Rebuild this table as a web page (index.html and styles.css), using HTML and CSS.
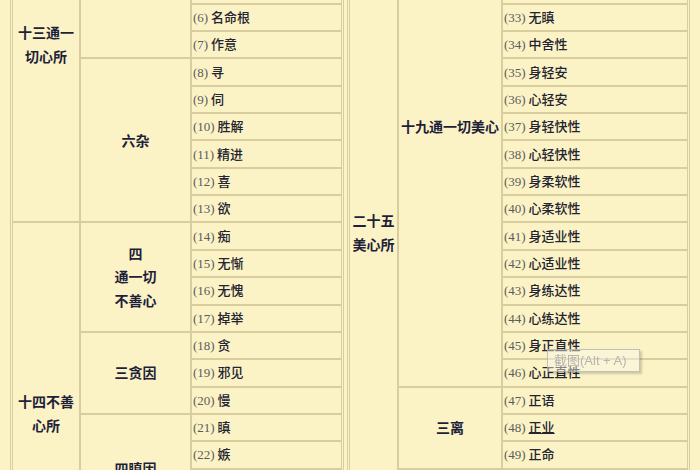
FILE: index.html
```html
<!DOCTYPE html>
<html lang="zh-CN">
<head>
<meta charset="utf-8">
<title>五十二心所</title>
<link rel="stylesheet" href="styles.css">
</head>
<body>
<div class="wrap">
  <table class="tbl left">
    <colgroup><col class="c1"><col class="c2"><col class="c3"></colgroup>
    <tbody>
      <tr><td class="lb" rowspan="13">十三通一切心所</td><td class="lb" rowspan="7">七遍一切心</td><td class="it"><span class="n">(1)</span> 触</td></tr>
      <tr><td class="it"><span class="n">(2)</span> 受</td></tr>
      <tr><td class="it"><span class="n">(3)</span> 想</td></tr>
      <tr><td class="it"><span class="n">(4)</span> 思</td></tr>
      <tr><td class="it"><span class="n">(5)</span> 一境性</td></tr>
      <tr><td class="it"><span class="n">(6)</span> 名命根</td></tr>
      <tr><td class="it"><span class="n">(7)</span> 作意</td></tr>
      <tr><td class="lb" rowspan="6">六杂</td><td class="it"><span class="n">(8)</span> 寻</td></tr>
      <tr><td class="it"><span class="n">(9)</span> 伺</td></tr>
      <tr><td class="it"><span class="n">(10)</span> 胜解</td></tr>
      <tr><td class="it"><span class="n">(11)</span> 精进</td></tr>
      <tr><td class="it"><span class="n">(12)</span> 喜</td></tr>
      <tr><td class="it"><span class="n">(13)</span> 欲</td></tr>
      <tr><td class="lb" rowspan="14">十四不善心所</td><td class="lb" rowspan="4">四<br>通一切<br>不善心</td><td class="it"><span class="n">(14)</span> 痴</td></tr>
      <tr><td class="it"><span class="n">(15)</span> 无惭</td></tr>
      <tr><td class="it"><span class="n">(16)</span> 无愧</td></tr>
      <tr><td class="it"><span class="n">(17)</span> 掉举</td></tr>
      <tr><td class="lb" rowspan="3">三贪因</td><td class="it"><span class="n">(18)</span> 贪</td></tr>
      <tr><td class="it"><span class="n">(19)</span> 邪见</td></tr>
      <tr><td class="it"><span class="n">(20)</span> 慢</td></tr>
      <tr><td class="lb" rowspan="4">四瞋因</td><td class="it"><span class="n">(21)</span> 瞋</td></tr>
      <tr><td class="it"><span class="n">(22)</span> 嫉</td></tr>
      <tr><td class="it"><span class="n">(23)</span> 悭</td></tr>
      <tr><td class="it"><span class="n">(24)</span> 恶作</td></tr>
      <tr><td class="lb" rowspan="2">二昏沉</td><td class="it"><span class="n">(25)</span> 昏沉</td></tr>
      <tr><td class="it"><span class="n">(26)</span> 睡眠</td></tr>
      <tr><td class="lb">一疑</td><td class="it"><span class="n">(27)</span> 疑</td></tr>
    </tbody>
  </table>
  <table class="tbl right">
    <colgroup><col class="d1"><col class="d2"><col class="d3"></colgroup>
    <tbody>
      <tr><td class="lb" rowspan="25">二十五美心所</td><td class="lb" rowspan="19">十九通一切美心</td><td class="it"><span class="n">(28)</span> 信</td></tr>
      <tr><td class="it"><span class="n">(29)</span> 念</td></tr>
      <tr><td class="it"><span class="n">(30)</span> 惭</td></tr>
      <tr><td class="it"><span class="n">(31)</span> 愧</td></tr>
      <tr><td class="it"><span class="n">(32)</span> 无贪</td></tr>
      <tr><td class="it"><span class="n">(33)</span> 无瞋</td></tr>
      <tr><td class="it"><span class="n">(34)</span> 中舍性</td></tr>
      <tr><td class="it"><span class="n">(35)</span> 身轻安</td></tr>
      <tr><td class="it"><span class="n">(36)</span> 心轻安</td></tr>
      <tr><td class="it"><span class="n">(37)</span> 身轻快性</td></tr>
      <tr><td class="it"><span class="n">(38)</span> 心轻快性</td></tr>
      <tr><td class="it"><span class="n">(39)</span> 身柔软性</td></tr>
      <tr><td class="it"><span class="n">(40)</span> 心柔软性</td></tr>
      <tr><td class="it"><span class="n">(41)</span> 身适业性</td></tr>
      <tr><td class="it"><span class="n">(42)</span> 心适业性</td></tr>
      <tr><td class="it"><span class="n">(43)</span> 身练达性</td></tr>
      <tr><td class="it"><span class="n">(44)</span> 心练达性</td></tr>
      <tr><td class="it"><span class="n">(45)</span> 身正直性</td></tr>
      <tr><td class="it"><span class="n">(46)</span> 心正直性</td></tr>
      <tr><td class="lb" rowspan="3">三离</td><td class="it"><span class="n">(47)</span> 正语</td></tr>
      <tr><td class="it"><span class="n">(48)</span> <span class="ul">正业</span></td></tr>
      <tr><td class="it"><span class="n">(49)</span> 正命</td></tr>
      <tr><td class="lb" rowspan="2">二无量</td><td class="it"><span class="n">(50)</span> 悲</td></tr>
      <tr><td class="it"><span class="n">(51)</span> 随喜</td></tr>
      <tr><td class="lb">一无痴</td><td class="it tall"><span class="n">(52)</span> 慧根</td></tr>
    </tbody>
  </table>
</div>
<div class="tip">截图(Alt + A)</div>
</body>
</html>
```

FILE: styles.css
```css
html, body {
  background: #fbf3c6;
}
body {
  margin: -135px 0 0 0;
  font-family: "Noto Sans CJK SC", "Noto Sans", sans-serif;
}
.wrap {
  display: flex;
  align-items: flex-start;
  padding-left: 10px;
  gap: 3px;
}
.tbl {
  border-collapse: separate;
  border-spacing: 0;
  border: 1px solid #d8cd9f;
  padding: 1px;
  table-layout: fixed;
  box-sizing: border-box;
}
.left { width: 334px; }
.right { width: 343px; }
.c1 { width: 68px; }
.c2 { width: 111px; }
.c3 { width: 151px; }
.d1 { width: 49px; }
.d2 { width: 104px; }
.d3 { width: 186px; }
.tbl td {
  border: 1px solid #d8cd9f;
  box-sizing: border-box;
}
.it {
  height: 27.35px;
  padding: 0 1px;
  font-size: 13px;
  line-height: 16px;
  font-weight: 500;
  color: #232331;
  vertical-align: middle;
  white-space: nowrap;
}
.it.tall { height: 75px; }
.n {
  font-family: "Liberation Serif", serif;
  font-weight: 400;
  color: #5b5b5b;
  font-size: 13px;
}
.ul { text-decoration: underline; }
.lb {
  text-align: center;
  vertical-align: middle;
  font-weight: 700;
  font-size: 14px;
  line-height: 23.5px;
  color: #1f1f3a;
  padding: 0 1px;
}
.tip {
  position: fixed;
  left: 547px;
  top: 349px;
  width: 93px;
  height: 23px;
  box-sizing: border-box;
  border: 1px solid rgba(170, 170, 170, 0.7);
  background: rgba(250, 248, 235, 0.45);
  box-shadow: 2px 2px 2px rgba(0, 0, 0, 0.18);
  color: #b5b5b0;
  font-family: "Liberation Sans", "Noto Sans CJK SC", sans-serif;
  font-size: 13px;
  line-height: 21px;
  padding-left: 6px;
  white-space: nowrap;
}
```
